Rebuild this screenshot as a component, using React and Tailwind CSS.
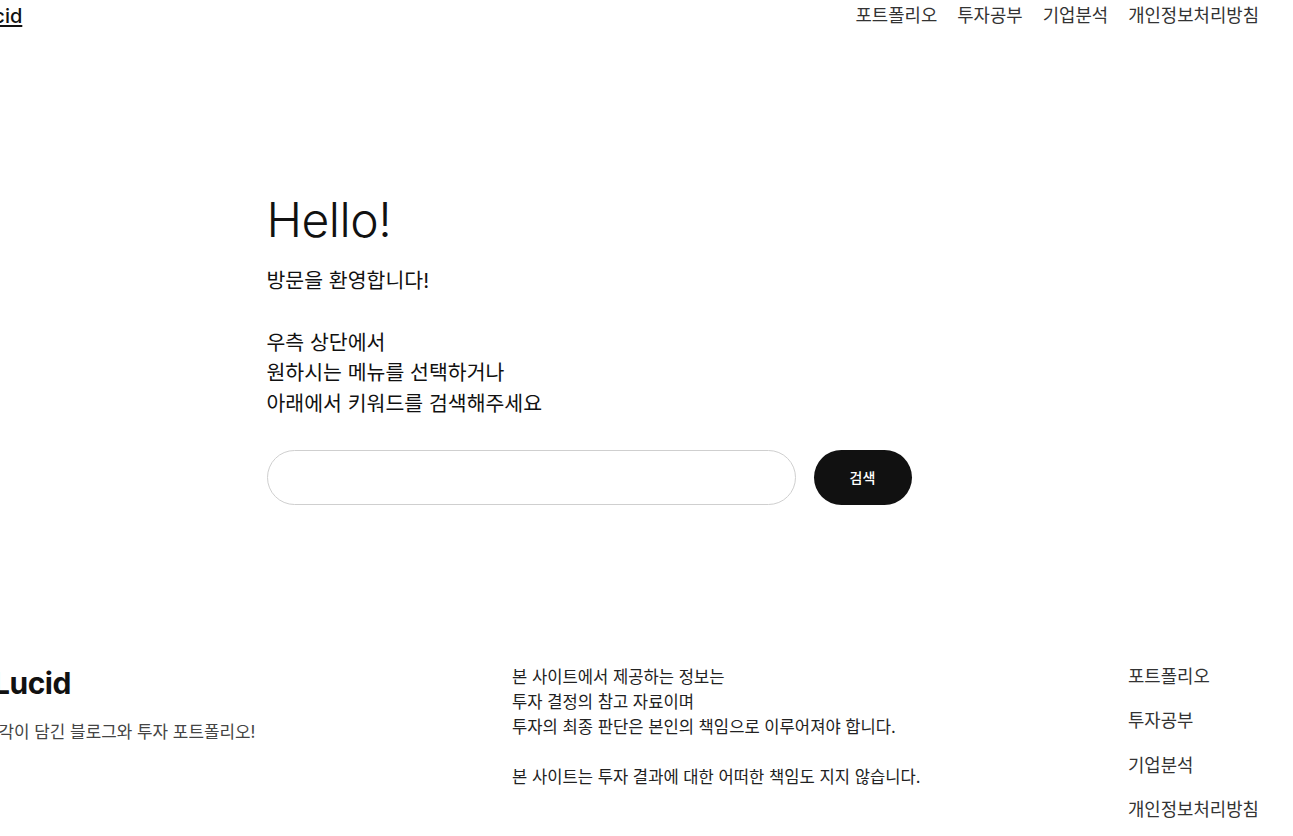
export default function App() {
  return (
    <div className="w-[1293px] h-[836px] overflow-hidden bg-white text-[#111] font-['Inter','Noto_Sans_CJK_KR',sans-serif]">
      <header className="flex items-center justify-between h-[32px] pr-[34px]">
        <a className="ml-[-30px] text-[20px] font-medium underline underline-offset-2 leading-none text-[#111]">Lucid</a>
        <nav className="flex gap-[20px] text-[17.8px] text-[#333]">
          <span>포트폴리오</span>
          <span>투자공부</span>
          <span>기업분석</span>
          <span>개인정보처리방침</span>
        </nav>
      </header>

      <main className="w-[760px] mx-auto pt-[159px]">
        <h1 className="text-[48px] font-light leading-[58px] tracking-[-0.5px]">Hello!</h1>
        <p className="mt-[17px] text-[20.5px] leading-[30.75px] text-[#111]">
          방문을 환영합니다!
          <br />
          <br />
          우측 상단에서
          <br />
          원하시는 메뉴를 선택하거나
          <br />
          아래에서 키워드를 검색해주세요
        </p>
        <div className="flex items-center gap-[18px] mt-[30px]">
          <input className="w-[529px] h-[55px] rounded-full border border-[#cfcfcf] px-6 outline-none" />
          <button className="w-[98px] h-[55px] rounded-full bg-[#111] text-white text-[14px] font-medium">검색</button>
        </div>
      </main>

      <footer className="flex mt-[160px]">
        <div className="w-[512px]">
          <div className="ml-[-7px] text-[30px] font-bold leading-[36px] tracking-[-0.5px]">Lucid</div>
          <div className="ml-[-84px] mt-[19px] text-[16.9px] leading-[24px] text-[#444] whitespace-nowrap">투자자의 생각이 담긴 블로그와 투자 포트폴리오!</div>
        </div>
        <div className="flex-1 text-[16.6px] leading-[25px] text-[#222]">
          본 사이트에서 제공하는 정보는
          <br />
          투자 결정의 참고 자료이며
          <br />
          투자의 최종 판단은 본인의 책임으로 이루어져야 합니다.
          <br />
          <br />
          본 사이트는 투자 결과에 대한 어떠한 책임도 지지 않습니다.
        </div>
        <div className="w-[165px] flex flex-col gap-[20.5px] text-[17.8px] leading-[24px] text-[#333]">
          <span>포트폴리오</span>
          <span>투자공부</span>
          <span>기업분석</span>
          <span>개인정보처리방침</span>
        </div>
      </footer>
    </div>
  );
}
